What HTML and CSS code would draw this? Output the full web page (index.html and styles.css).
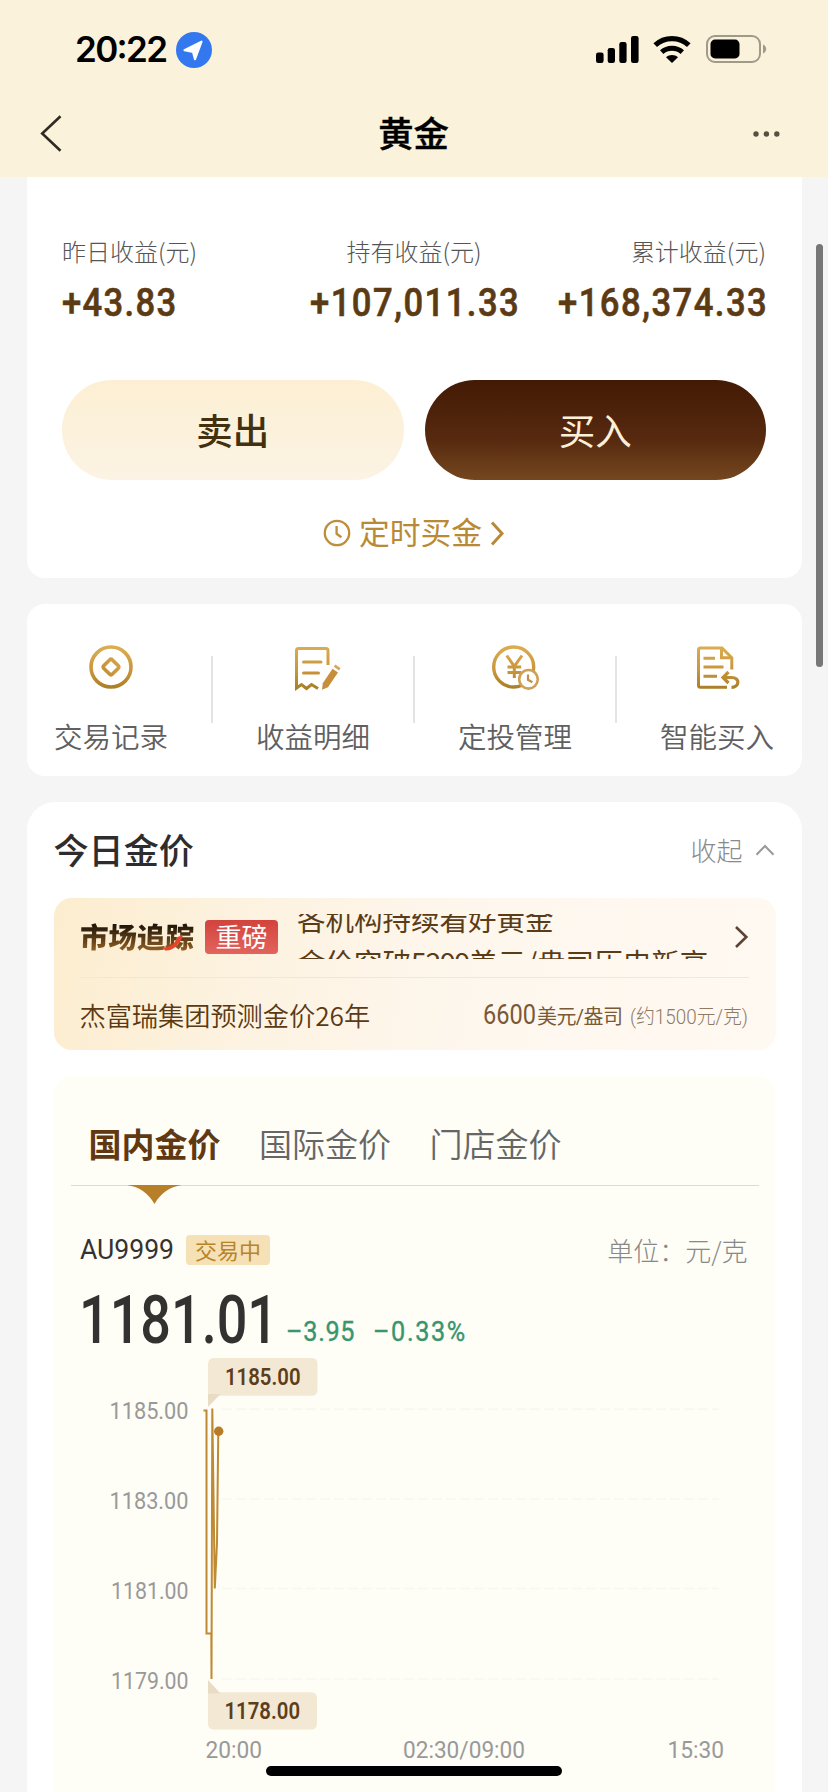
FILE: index.html
```html
<!DOCTYPE html>
<html lang="zh-CN">
<head>
<meta charset="utf-8">
<title>黄金</title>
<link rel="stylesheet" href="styles.css">
</head>
<body>
<svg class="defs" width="0" height="0" aria-hidden="true">
  <defs>
    <linearGradient id="gold" gradientUnits="userSpaceOnUse" x1="0" y1="-22" x2="0" y2="22">
      <stop offset="0" stop-color="#dcae52"/><stop offset=".6" stop-color="#c9943a"/><stop offset="1" stop-color="#a97e26"/>
    </linearGradient>
  </defs>
</svg>
<div class="screen">
  <header class="top">
    <div class="status">
      <div class="status-left">
        <svg class="clock" width="94" height="36"><text x="0" y="30.4" textLength="93">20:22</text></svg>
        <svg width="36" height="36" viewBox="0 0 36 36"><circle cx="18" cy="18" r="18" fill="#3478f0"/><path d="M8.5 18.2 25.5 9.7 19 27.2 17 19.8Z" fill="#fff" stroke="#fff" stroke-width="2.2" stroke-linejoin="round"/></svg>
      </div>
      <div class="status-right">
        <svg width="43" height="27" viewBox="0 0 43 27"><rect x="0" y="16.5" width="7.6" height="10.5" rx="2.2"/><rect x="11.7" y="12" width="7.3" height="15" rx="2.2"/><rect x="23.3" y="6" width="7.3" height="21" rx="2.2"/><rect x="35" y="0" width="7.6" height="27" rx="2.2"/></svg>
        <svg class="wifi" width="38" height="27" viewBox="0 0 38 27"><path d="M2.2 9.2C11.5.3 26.5.3 35.8 9.2" fill="none" stroke="#000" stroke-width="5.2"/><path d="M8.7 16.2C14.5 10.9 23.5 10.9 29.3 16.2" fill="none" stroke="#000" stroke-width="5"/><path d="M13 21.3C16.3 18.1 21.7 18.1 25 21.3L19 27Z"/></svg>
        <svg width="61" height="28" viewBox="0 0 61 28"><rect x="1" y="1" width="53" height="26" rx="8" fill="none" stroke="#9f9a8a" stroke-width="2"/><rect x="4.5" y="4.6" width="29" height="18.8" rx="4.5"/><path d="M57 9.5c4.3 1.7 4.3 7.3 0 9Z" fill="#9f9a8a"/></svg>
      </div>
    </div>
    <nav class="nav">
      <svg width="22" height="37" viewBox="0 0 22 37"><path d="M20.5 1.2 2.2 18.5 20.5 35.8" fill="none" stroke="#2f2b22" stroke-width="2.6"/></svg>
      <h1>黄金</h1>
      <svg width="27" height="6" viewBox="0 0 27 6" fill="#55503f"><circle cx="3" cy="3" r="2.7"/><circle cx="13.4" cy="3" r="2.7"/><circle cx="23.8" cy="3" r="2.7"/></svg>
    </nav>
  </header>

  <section class="card summary">
    <div class="stats">
      <div class="stat"><span>昨日收益(元)</span><svg class="money" width="114" height="44"><text x="0" y="31.5" transform="scale(.9 1)" textLength="127">+43.83</text></svg></div>
      <div class="stat mid"><span>持有收益(元)</span><svg class="money" width="208" height="44"><text x="0" y="31.5" transform="scale(.9 1)" textLength="232">+107,011.33</text></svg></div>
      <div class="stat end"><span>累计收益(元)</span><svg class="money" width="208" height="44"><text x="0" y="31.5" transform="scale(.9 1)" textLength="232">+168,374.33</text></svg></div>
    </div>
    <div class="actions"><div class="btn sell">卖出</div><div class="btn buy">买入</div></div>
    <div class="schedule">
      <svg class="timer" width="28" height="28" viewBox="0 0 28 28" fill="none" stroke="#bd8f3c" stroke-width="2.3"><circle cx="14" cy="14" r="12.2"/><path d="M13.6 7v7.8l4.8 3.4"/></svg>
      <span>定时买金</span>
      <svg class="timer" width="15" height="25" viewBox="0 0 15 25"><path d="M2 1.5 12 12.5 2 23.5" fill="none" stroke="#b98a35" stroke-width="3"/></svg>
    </div>
  </section>

  <section class="card tools">
    <div class="tool"><svg viewBox="-30 -30 60 60" fill="none" stroke="url(#gold)"><circle r="20" stroke-width="3.6"/><rect x="-6" y="-6" width="12" height="12" rx="2" transform="rotate(45)" stroke-width="3.6"/></svg><span>交易记录</span></div>
    <div class="tool"><svg viewBox="-30 -30 60 60" fill="none" stroke="url(#gold)" stroke-width="3"><path d="M15-2V-16.5Q15-18.5 13-18.5H-14.5Q-16.5-18.5-16.5-16.5V21L-11.5 17.5-6.5 21.5-1.5 17.5 5 21.5"/><path d="M-9.5-5H8M-9.5 6H5.5" stroke-linecap="round"/><path d="M9 22.8 9.8 16.2 19.5 1.8 25 5.6 15 20.2Z" fill="#c78f3c" stroke="none"/><path d="M20.8-.2 22.3-2.6 27.5 1 26 3.4Z" fill="#d5a85c" stroke="none"/></svg><span>收益明细</span></div>
    <div class="tool"><svg viewBox="-30 -30 60 60" fill="none" stroke="url(#gold)" stroke-width="3"><circle cx="-1.3" r="20" stroke-width="3.4"/><path d="M-8.3-11.5-.7-.7 7-11.5M-.7-.7V11M-7.5 0H6.2M-7.5 5.6H6.2"/><circle cx="13.5" cy="12.3" r="9.3" fill="#fff" stroke="#cfa055" stroke-width="2.6"/><path d="M13 7.6v5.2l4.4 2.4" stroke="#c2903e" stroke-width="2.2"/></svg><span>定投管理</span></div>
    <div class="tool"><svg viewBox="-30 -30 60 60" fill="none" stroke="url(#gold)" stroke-width="3"><path d="M14.8 2.5V-9.2L5-19H-16.5Q-18.5-19-18.5-17V18.3Q-18.5 20.3-16.5 20.3H10"/><path d="M4.5-18.5V-9.2H14.5"/><path d="M-13.5-8.7H-2M-13.5 0H6.5M-13.5 9.2H0"/><path d="M11.5 5 6 10.5 11.5 16M6 10.5H14.5C23.5 10.5 22.5 20.3 14.5 20.3" stroke-width="3.2"/></svg><span>智能买入</span></div>
  </section>

  <section class="card today">
    <div class="today-head">
      <h2>今日金价</h2>
      <div class="fold"><span>收起</span><svg width="20" height="12" viewBox="0 0 20 12"><path d="M1.5 10.8 10 2 18.5 10.8" fill="none" stroke="#999" stroke-width="2"/></svg></div>
    </div>
    <div class="market">
      <div class="market-top">
        <div class="track"><span>市场追踪</span><svg class="swoosh" width="20" height="16" viewBox="0 0 20 16"><path d="M0 12.5C8 12.5 13 7 14.5 2L20 0C18 8 10 16.5 2 15.5Z" fill="#e8412c"/></svg></div>
        <div class="hot">重磅</div>
        <div class="ticker"><div>各机构持续看好黄金</div><div>金价突破<i>5299</i>美元/盎司历史新高</div></div>
        <svg width="15" height="24" viewBox="0 0 15 24"><path d="M2 2 12.3 12 2 22" fill="none" stroke="#5c4335" stroke-width="2.6"/></svg>
      </div>
      <div class="market-bottom">
        <span class="forecast">杰富瑞集团预测金价26年</span>
        <svg class="target" width="267" height="36"><text class="t1" x="1" y="25.3" textLength="53" lengthAdjust="spacingAndGlyphs">6600</text><text class="t2" x="55" y="25.3" textLength="86">美元/盎司</text><text class="t3" x="148" y="25.3" textLength="118" lengthAdjust="spacingAndGlyphs">(约1500元/克)</text></svg>
      </div>
    </div>

    <div class="panel">
      <div class="tabs">
        <span class="on">国内金价<svg class="pointer" width="55" height="19" viewBox="0 0 55 19"><path d="M0 0H55C42 2 34 8 27.5 19 21 8 13 2 0 0Z" fill="#b77f27"/></svg></span>
        <span>国际金价</span><span>门店金价</span>
      </div>
      <div class="quote-head">
        <svg class="code" width="95" height="32"><text x="0" y="26" textLength="94" lengthAdjust="spacingAndGlyphs">AU9999</text></svg>
        <span class="state">交易中</span>
        <span class="unit">单位：元/克</span>
      </div>
      <svg class="price" width="400" height="64"><text class="big" x="-1" y="56" textLength="199" lengthAdjust="spacingAndGlyphs">1181.01</text><text class="delta" x="229" y="54" transform="scale(.9 1)" textLength="76">–3.95</text><text class="delta" x="325.5" y="54" transform="scale(.9 1)" textLength="102.500">–0.33%</text></svg>
      <svg class="chart" width="720" height="442" viewBox="54 1350 720 442">
        <path class="grid" d="M222 1409.3H719M222 1499H719M222 1588.5H719M222 1679H719"/>
        <g class="axis">
          <text x="109.5" y="1419" textLength="79" lengthAdjust="spacingAndGlyphs">1185.00</text>
          <text x="109.5" y="1509" textLength="79" lengthAdjust="spacingAndGlyphs">1183.00</text>
          <text x="111" y="1598.7" textLength="77.5" lengthAdjust="spacingAndGlyphs">1181.00</text>
          <text x="111" y="1688.5" textLength="77.5" lengthAdjust="spacingAndGlyphs">1179.00</text>
          <text x="205.5" y="1758" textLength="56.5" lengthAdjust="spacingAndGlyphs">20:00</text>
          <text x="403" y="1758" textLength="122" lengthAdjust="spacingAndGlyphs">02:30/09:00</text>
          <text x="667.5" y="1758" textLength="56.5" lengthAdjust="spacingAndGlyphs">15:30</text>
        </g>
        <path class="tip" d="M208 1364Q208 1358 214 1358H311.5Q317.5 1358 317.5 1364V1389.7Q317.5 1395.7 311.5 1395.7H208Z"/>
        <path class="tail" d="M208 1394H220.5L208 1407Z"/>
        <path class="tip" d="M208 1692.3H311Q317 1692.3 317 1698.3V1723.5Q317 1729.5 311 1729.5H214Q208 1729.5 208 1723.5Z"/>
        <path class="tail" d="M208 1680 220.5 1693.5H208Z"/>
        <text class="tip-text" x="225" y="1385" textLength="75.5" lengthAdjust="spacingAndGlyphs">1185.00</text>
        <text class="tip-text" x="224.5" y="1719" textLength="75.5" lengthAdjust="spacingAndGlyphs">1178.00</text>
        <path class="line" d="M203.5 1410.5H206.5V1633.5H211.3L211.5 1679 212.3 1408.5 214.8 1588.5 217 1543 218.3 1431"/>
        <circle cx="218.7" cy="1431.3" r="4.7" fill="#b97c25"/>
      </svg>
    </div>
  </section>
  <div class="scrollbar"></div>
  <div class="home"></div>
</div>
</body>
</html>
```
FILE: styles.css
```css
* { box-sizing: border-box; }
body { margin: 0; background: #f5f5f5; font-family: "Noto Sans CJK SC", sans-serif; }
svg { display: block; flex: none; overflow: visible; }
.defs { position: absolute; }
.screen { position: relative; width: 828px; height: 1792px; overflow: hidden; }

.top { height: 176.7px; background: #faf2da; }
.status { height: 98px; padding: 32px 61px 0 75px; display: flex; justify-content: space-between; align-items: flex-start; }
.status-left { display: flex; gap: 7px; }
.clock text { font: 600 35px Inter, sans-serif; }
.status-right { display: flex; align-items: center; padding-top: 3px; }
.wifi { margin: 0 15px 0 14px; }
.nav { height: 70px; padding: 1px 48px 0 40px; display: flex; align-items: center; justify-content: space-between; }
.nav h1 { margin: -3px 0 0 12px; font-size: 35.3px; line-height: 50px; font-weight: 500; -webkit-text-stroke: .4px #000; }

.card { margin: 0 26.5px; background: #fff; border-radius: 22px; }
.summary { height: 401px; padding: 59px 35.5px 0; border-radius: 0 0 18px 18px; }
.stats { display: grid; grid-template-columns: 1fr 208px 1fr; height: 102px; }
.stat { display: flex; flex-direction: column; gap: 18px; }
.stat span { font-size: 24px; line-height: 30px; font-weight: 300; color: #555; white-space: nowrap; }
.mid { align-items: center; }
.end { align-items: flex-end; }
.money text { font: 500 38.5px Roboto, sans-serif; fill: #5b3a14; stroke: #5b3a14; stroke-width: .6px; }
.actions { margin-top: 42.5px; display: flex; gap: 21px; }
.btn { flex: 1; height: 99.5px; border-radius: 50px; font-size: 36.5px; line-height: 99px; text-align: center; }
.sell { background: linear-gradient(#fcefd3, #fbf3e4); color: #42300f; font-weight: 500; }
.buy { background: linear-gradient(#431a04, #572a10 60%, #75471f); color: #fdf0d8; }
.schedule { margin-top: 31.5px; height: 40px; display: flex; align-items: center; justify-content: center; color: #b98a35; font-size: 30.8px; line-height: 40px; }
.schedule span { margin: 0 8px; }
.timer { position: relative; top: 2px; }

.tools { margin-top: 26.5px; height: 172px; padding-top: 33px; display: flex; justify-content: center; overflow: hidden; border-radius: 18px; }
.tool { flex: none; width: 202px; display: flex; flex-direction: column; align-items: center; position: relative; }
.tool svg { width: 60px; height: 60px; }
.tool span { margin-top: 19px; font-size: 28.5px; line-height: 40px; font-weight: 350; color: #606060; }
.tool + .tool::before { content: ""; position: absolute; left: -1px; top: 19px; width: 1.5px; height: 67px; background: #e4e4e4; }

.today { margin-top: 26px; height: 1100px; padding: 0 27px; border-radius: 28px; }
.today-head { height: 95.5px; display: flex; align-items: center; justify-content: space-between; }
.today-head h2 { margin: -2px 0 0; font-size: 35.1px; line-height: 50px; font-weight: 500; color: #2d2d30; }
.fold { display: flex; align-items: center; gap: 12px; font-size: 26px; font-weight: 300; color: #8a8a8a; }

.market { height: 152px; margin-right: -1px; padding: 0 27px 0 26px; border-radius: 18px; background: linear-gradient(100deg, #fcedcf 0%, #fdf3e2 30%, #fef7ee 60%, #fef9f2 100%); }
.market-top { height: 80.5px; display: flex; align-items: center; border-bottom: 1.5px solid #f0e6dc; }
.track { position: relative; width: 114px; margin-top: -3px; }
.track span { display: block; font-size: 28.5px; line-height: 40px; font-weight: 900; transform: skewX(-2deg); white-space: nowrap; color: transparent; background: linear-gradient(#22180a 25%, #8f5d22 85%); background-clip: text; -webkit-background-clip: text; }
.swoosh { position: absolute; left: 83px; top: 19px; }
.hot { margin: -1px 19px 0 11.5px; width: 73px; height: 34px; border-radius: 4px; background: linear-gradient(#d2433d, #e2645c); color: #fff; font-size: 26px; line-height: 32px; text-align: center; }
.ticker { height: 45.5px; margin-top: -2px; flex: 1; overflow: hidden; color: #5a3d17; font-size: 28.5px; white-space: nowrap; }
.ticker div { height: 43px; line-height: 43px; }
.ticker div:first-child { margin-top: -17px; }
.ticker i { font-style: normal; letter-spacing: -1.3px; }
.market-bottom { height: 70px; display: flex; align-items: center; justify-content: space-between; }
.forecast { font-size: 26.2px; line-height: 36px; margin-top: 3px; color: #5a3a14; font-weight: 350; }
.target { margin-top: 8px; font-family: Roboto, "Noto Sans CJK SC", sans-serif; }
.t1 { font-size: 27px; fill: #7a5a36; }
.t2 { font-size: 20px; fill: #7a5a36; }
.t3 { font-size: 20px; font-weight: 300; fill: #8f7a64; }

.panel { margin-top: 26.5px; height: 800px; background: #fefdf6; border-radius: 18px; }
.tabs { height: 110px; margin: 0 16px 0 17px; padding: 38.5px 0 0 18px; display: flex; gap: 38px; border-bottom: 1.5px solid #dfddd0; font-size: 33px; line-height: 56px; color: #666; font-weight: 350; }
.tabs span { position: relative; width: 132.5px; white-space: nowrap; }
.tabs .on { color: #603811; font-weight: 700; }
.pointer { position: absolute; left: 38px; top: 70.5px; }
.quote-head { height: 30px; margin: 49px 26px 0 26px; display: flex; align-items: center; }
.code { margin-top: -3px; }
.code text { font: 400 28px Roboto, sans-serif; fill: #333; }
.state { margin-left: 11.5px; width: 84px; height: 30px; border-radius: 4px; background: #f5e1b5; color: #b8842a; font-size: 22px; line-height: 28px; text-align: center; }
.unit { margin-left: auto; margin-right: 1px; font-size: 26px; font-weight: 300; color: #888; line-height: 30px; }
.price { margin: 22px 0 0 26px; }
.big { font: 500 67.5px Roboto, sans-serif; fill: #333230; }
.delta { font: 400 28px Roboto, sans-serif; fill: #399570; stroke: #399570; stroke-width: .4px; }
.chart { margin-top: -1px; font-family: Roboto, sans-serif; }
.grid { fill: none; stroke: #f8f6ef; stroke-width: 1.5px; stroke-dasharray: 10 4; }
.axis text { font-size: 24px; fill: #999; }
.tip { fill: #f3e8d3; }
.tail { fill: #e8dcc4; }
.tip-text { font-size: 23px; font-weight: 600; fill: #5d3e1a; }
.line { fill: none; stroke: #bf8a34; stroke-width: 2px; }

.scrollbar { position: absolute; left: 816px; top: 244px; width: 6.5px; height: 423px; border-radius: 4px; background: #777; }
.home { position: absolute; left: 266px; top: 1766px; width: 296px; height: 10px; border-radius: 5px; background: #000; }
```
